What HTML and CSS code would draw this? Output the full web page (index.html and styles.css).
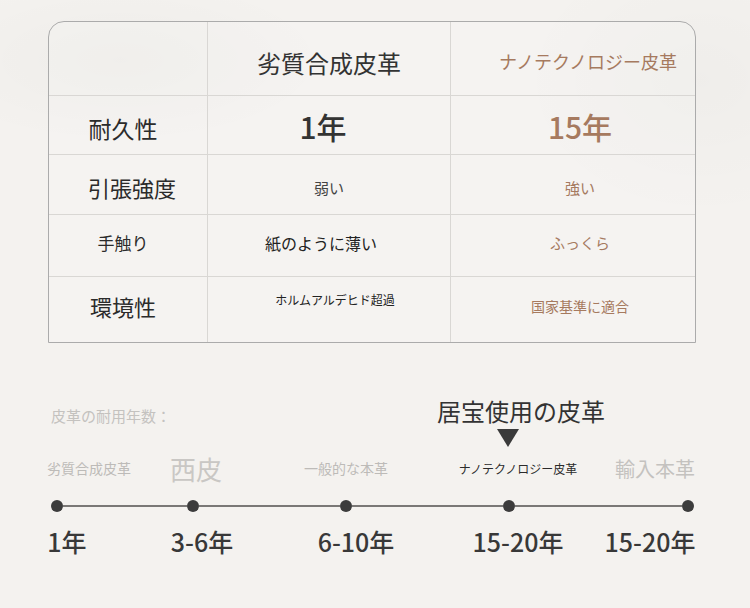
FILE: index.html
```html
<!DOCTYPE html>
<html lang="ja">
<head>
<meta charset="utf-8">
<title>皮革比較</title>
<link rel="stylesheet" href="styles.css">
</head>
<body>
<div class="page">
  <div class="table">
    <div class="cell c1 hdr"></div>
    <div class="cell c2 hdr"><span class="h-dark">劣質合成皮革</span></div>
    <div class="cell c3 hdr"><span class="h-brown">ナノテクノロジー皮革</span></div>

    <div class="cell c1 r1"><span class="lbl lbl-lg">耐久性</span></div>
    <div class="cell c2 r1"><span class="big">1年</span></div>
    <div class="cell c3 r1"><span class="big brown">15年</span></div>

    <div class="cell c1 r2"><span class="lbl">引張強度</span></div>
    <div class="cell c2 r2"><span class="sm">弱い</span></div>
    <div class="cell c3 r2"><span class="sm brown">強い</span></div>

    <div class="cell c1 r3"><span class="lbl lbl-sm">手触り</span></div>
    <div class="cell c2 r3"><span class="md">紙のように薄い</span></div>
    <div class="cell c3 r3"><span class="sm brown">ふっくら</span></div>

    <div class="cell c1 r4"><span class="lbl">環境性</span></div>
    <div class="cell c2 r4"><span class="xs up">ホルムアルデヒド超過</span></div>
    <div class="cell c3 r4"><span class="sm2 brown">国家基準に適合</span></div>
  </div>

  <div class="timeline">
    <div class="tl-head">
      <div class="tl-title">皮革の耐用年数：</div>
      <div class="callout">
        <div class="callout-text">居宝使用の皮革</div>
        <div class="tri"></div>
      </div>
    </div>

    <div class="tl-labels">
      <div class="lab w1"><span class="g14">劣質合成皮革</span></div>
      <div class="lab w2"><span class="g26">西皮</span></div>
      <div class="lab w3"><span class="g14">一般的な本革</span></div>
      <div class="lab w4"><span class="d12">ナノテクノロジー皮革</span></div>
      <div class="lab w5"><span class="g20">輸入本革</span></div>
    </div>

    <div class="tl-line">
      <span class="dot"></span><span class="seg s1"></span>
      <span class="dot"></span><span class="seg s2"></span>
      <span class="dot"></span><span class="seg s3"></span>
      <span class="dot"></span><span class="seg s4"></span>
      <span class="dot"></span>
    </div>

    <div class="tl-years">
      <div class="yr y1">1年</div>
      <div class="yr y2">3-6年</div>
      <div class="yr y3">6-10年</div>
      <div class="yr y4">15-20年</div>
      <div class="yr y5">15-20年</div>
    </div>
  </div>
</div>
</body>
</html>
```

FILE: styles.css
```css
html, body {
  margin: 0;
  padding: 0;
}
body {
  width: 750px;
  height: 608px;
  overflow: hidden;
  background: #f4f2ef;
  background-image: radial-gradient(ellipse 300px 120px at 120px 60px, rgba(0,0,0,0.025), rgba(0,0,0,0) 70%),
                    radial-gradient(ellipse 260px 200px at 700px 80px, rgba(0,0,0,0.02), rgba(0,0,0,0) 70%);
  font-family: "Noto Sans CJK JP", "Noto Sans", sans-serif;
  color: #333;
}
.page {
  padding: 21px 0 0 48px;
}

/* table */
.table {
  width: 648px;
  box-sizing: border-box;
  border: 1px solid #ababab;
  border-radius: 16px 16px 0 0;
  display: grid;
  grid-template-columns: 159px 243px 244px;
  grid-template-rows: 74px 59px 60px 62px 65px;
  background: rgba(255,255,255,0.12);
}
.cell {
  display: flex;
  align-items: center;
  justify-content: center;
  border-bottom: 1px solid #d9d7d4;
  border-right: 1px solid #d9d7d4;
  box-sizing: border-box;
  white-space: nowrap;
}
.c3 { border-right: none; padding-left: 14px; }
.c1 { padding-right: 10px; }
.r4 { border-bottom: none; }

.hdr { padding-top: 8px; }
.c3.hdr { padding-left: 30px; padding-top: 4px; }
.r1 { padding-top: 6px; }
.r1.c2 { padding-top: 2px; padding-right: 12px; }
.r1.c3 { padding-top: 2px; }
.r2 { padding-top: 5px; }
.r2.c1 { padding-right: 0; padding-left: 8px; }
.r3 { padding-bottom: 6px; }
.r3.c2 { padding-right: 16px; }
.r4 { padding-bottom: 8px; }
.r4.c2 { padding-bottom: 20px; padding-left: 12px; }

.h-dark { font-size: 24px; color: #333; }
.h-brown { font-size: 18px; color: #a67a5f; }
.lbl { font-size: 22px; color: #2b2b2b; }
.lbl-lg { font-size: 23px; }
.lbl-sm { font-size: 17px; }
.big { font-size: 30px; font-weight: 500; color: #333; }
.sm { font-size: 15px; color: #444; }
.sm2 { font-size: 14px; color: #444; }
.md { font-size: 16px; color: #222; }
.xs { font-size: 12px; color: #222; }
.brown { color: #a67a5f; }

/* timeline */
.timeline {
  margin-left: -48px;
  margin-top: 54px;
}
.tl-head {
  display: flex;
  height: 54px;
  padding-left: 51px;
}
.tl-title {
  width: 386px;
  font-size: 15px;
  line-height: 20px;
  margin-top: 9px;
  color: #c4c2bf;
}
.callout {
  display: flex;
  flex-direction: column;
  align-items: center;
  width: 168px;
}
.callout-text {
  font-size: 24px;
  line-height: 28px;
  color: #333;
  white-space: nowrap;
}
.tri {
  margin-top: 4px;
  margin-right: 26px;
  width: 0;
  height: 0;
  border-left: 11px solid transparent;
  border-right: 11px solid transparent;
  border-top: 18px solid #3a3a3a;
}

.tl-labels {
  display: flex;
  align-items: center;
  height: 26px;
  margin-top: 4px;
  padding-left: 40px;
}
.lab {
  display: flex;
  justify-content: center;
  white-space: nowrap;
}
.w1 { width: 98px; }
.w2 { width: 116px; }
.w3 { width: 184px; }
.w4 { width: 160px; }
.w5 { width: 114px; }
.g14 { font-size: 14px; color: #bdbbb8; }
.g26 { font-size: 26px; color: #c9c7c4; }
.g20 { font-size: 20px; color: #c4c2bf; }
.d12 { font-size: 12px; color: #2b2b2b; }

.tl-line {
  display: flex;
  align-items: center;
  height: 12px;
  margin-top: 19px;
  padding-left: 51px;
}
.dot {
  width: 12px;
  height: 12px;
  border-radius: 50%;
  background: #3c3c3c;
  flex: none;
}
.seg {
  height: 2px;
  background: #7a7876;
  flex: none;
}
.s1 { width: 124px; }
.s2 { width: 141px; }
.s3 { width: 151px; }
.s4 { width: 167px; }

.tl-years {
  display: flex;
  margin-top: 14px;
  padding-left: 20px;
}
.yr {
  display: flex;
  justify-content: center;
  white-space: nowrap;
  font-size: 25px;
  line-height: 30px;
  font-weight: 500;
  color: #383838;
}
.y1 { width: 94px; }
.y2 { width: 176px; }
.y3 { width: 132px; }
.y4 { width: 192px; }
.y5 { width: 72px; }
```
